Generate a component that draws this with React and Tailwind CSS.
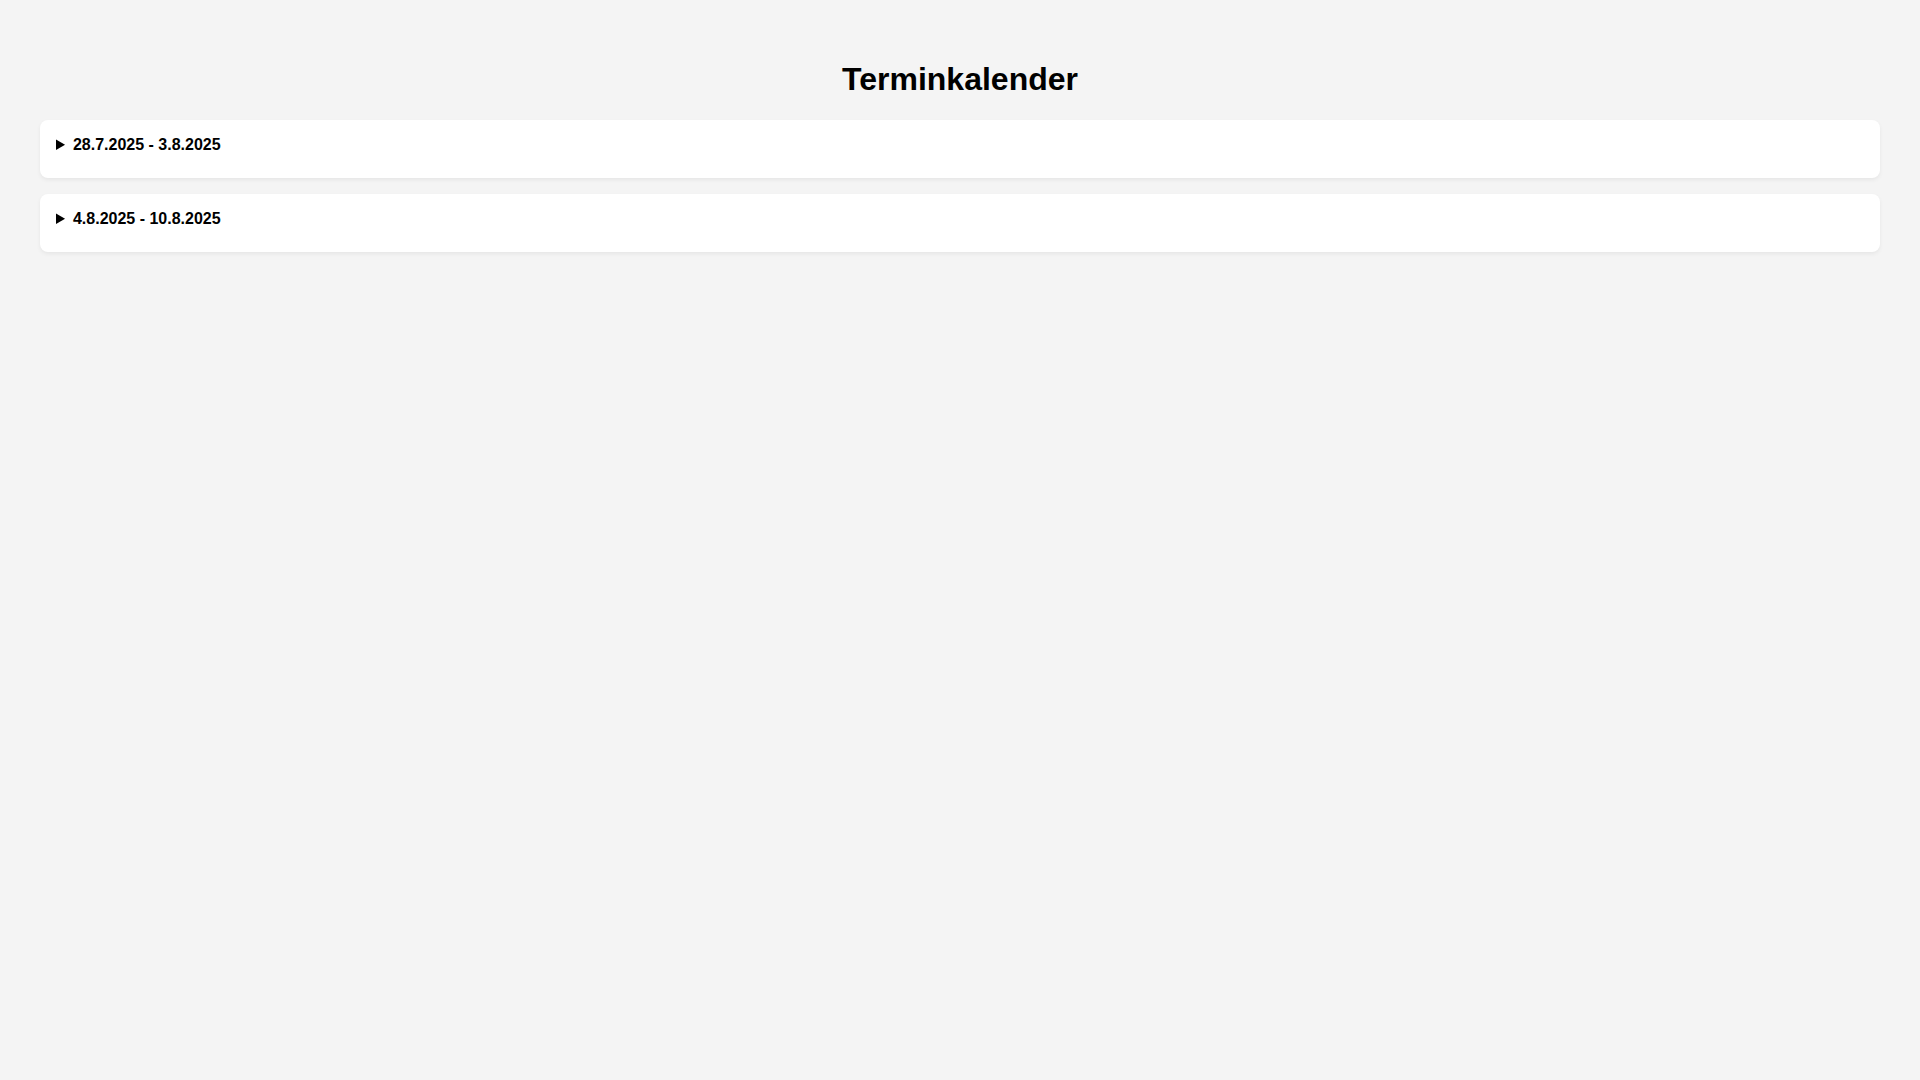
const WEEKS = ['28.7.2025 - 3.8.2025', '4.8.2025 - 10.8.2025'];

export default function App() {
  return (
    <div className="min-h-screen bg-[#f4f4f4] p-10 font-['Liberation_Sans',Arial,sans-serif] text-black">
      <h1 className="my-[21.44px] text-center text-[32px] leading-[36.8px] font-bold">Terminkalender</h1>
      <div className="flex flex-col gap-4">
        {WEEKS.map(w => (
          <details key={w} className="rounded-lg bg-white p-4 shadow-[0_2px_4px_rgba(0,0,0,0.06)]">
            <summary className="mb-2 cursor-pointer text-base leading-[18.4px] font-bold">{w}</summary>
          </details>
        ))}
      </div>
    </div>
  );
}
